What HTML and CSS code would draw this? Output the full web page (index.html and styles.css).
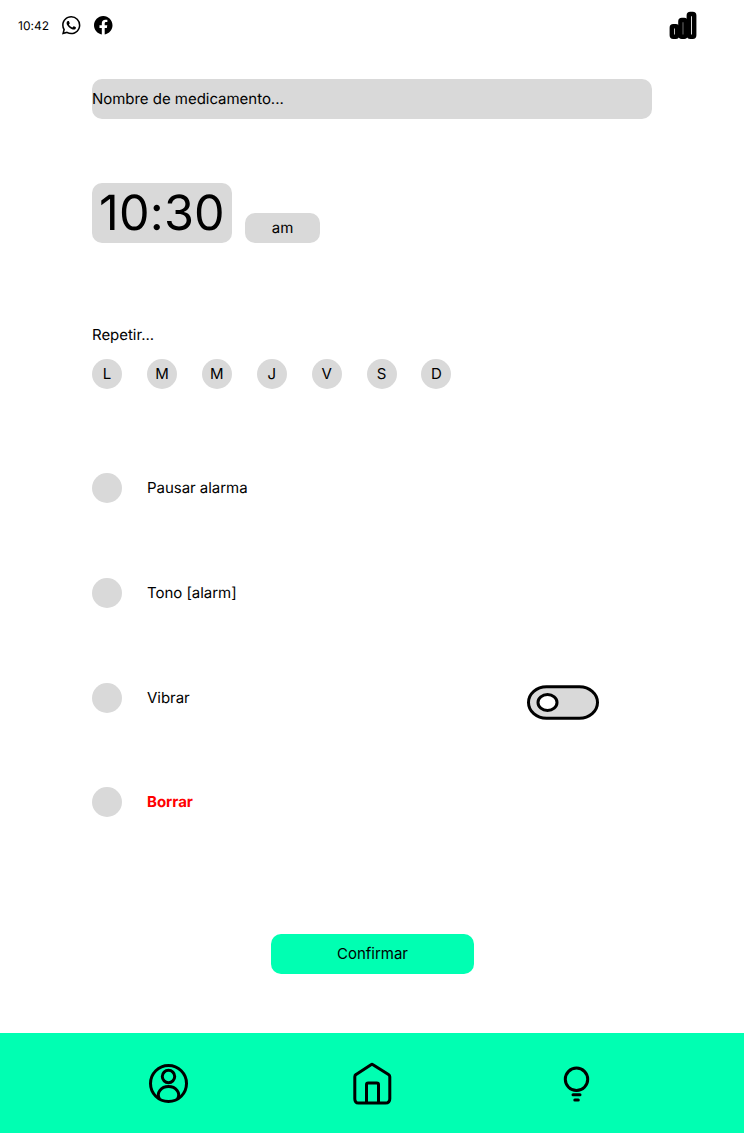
FILE: index.html
```html
<!DOCTYPE html>
<html lang="es">
<head>
<meta charset="utf-8">
<title>Alarma de medicamento</title>
<link rel="stylesheet" href="styles.css">
</head>
<body>
<header class="status">
  <span class="clock">10:42</span>
  <svg class="app-icon" viewBox="0 0 16 16"><path d="M13.601 2.326A7.85 7.85 0 0 0 7.994 0C3.627 0 .068 3.558.064 7.926c0 1.399.366 2.76 1.057 3.965L0 16l4.204-1.102a7.9 7.9 0 0 0 3.79.965h.004c4.368 0 7.926-3.558 7.93-7.93A7.9 7.9 0 0 0 13.6 2.326zM7.994 14.521a6.6 6.6 0 0 1-3.356-.92l-.24-.144-2.494.654.666-2.433-.156-.251a6.56 6.56 0 0 1-1.007-3.505c0-3.626 2.957-6.584 6.591-6.584a6.56 6.56 0 0 1 4.66 1.931 6.56 6.56 0 0 1 1.928 4.66c-.004 3.639-2.961 6.592-6.592 6.592m3.615-4.934c-.197-.099-1.17-.578-1.353-.646-.182-.065-.315-.099-.445.099-.133.197-.513.646-.627.775-.114.133-.232.148-.43.05-.197-.1-.836-.308-1.592-.985-.59-.525-.985-1.175-1.103-1.372-.114-.198-.011-.304.088-.403.087-.088.197-.232.296-.346.1-.114.133-.198.198-.33.065-.134.034-.248-.015-.347-.05-.099-.445-1.076-.612-1.47-.16-.389-.323-.335-.445-.34-.114-.007-.247-.007-.38-.007a.73.73 0 0 0-.529.247c-.182.198-.691.677-.691 1.654s.71 1.916.81 2.049c.098.133 1.394 2.132 3.383 2.992.47.205.84.326 1.129.418.475.152.904.129 1.246.08.38-.058 1.171-.48 1.338-.943.164-.464.164-.86.114-.943-.049-.084-.182-.133-.38-.232"/></svg>
  <svg class="app-icon" viewBox="0 0 16 16"><path d="M16 8.049c0-4.446-3.582-8.05-8-8.05C3.58 0 0 3.603 0 8.05c0 4.017 2.926 7.347 6.75 7.951v-5.625H4.72V8.05h2.03V6.275c0-2.017 1.195-3.131 3.022-3.131.876 0 1.791.157 1.791.157v1.98h-1.009c-.993 0-1.303.621-1.303 1.258v1.51h2.218l-.354 2.326H9.25V16c3.824-.604 6.75-3.934 6.75-7.951"/></svg>
  <svg class="signal" viewBox="0 0 28 28" stroke="#000" stroke-width="4.4">
    <rect x="2.800" y="14.200" width="5.400" height="10.500" rx="1.500" fill="#bbb"/>
    <rect x="11.400" y="8" width="5.200" height="16.700" rx="1.500" fill="#888"/>
    <rect x="19.800" y="2" width="5.400" height="22.700" rx="1.500" fill="#ddd"/>
  </svg>
</header>
<main class="content">
  <div class="name-field">Nombre de medicamento...</div>
  <div class="time-row">
    <div class="time">10:30</div>
    <div class="period">am</div>
  </div>
  <div class="repeat-label">Repetir...</div>
  <div class="days">
    <span class="dot">L</span><span class="dot">M</span><span class="dot">M</span><span class="dot">J</span><span class="dot">V</span><span class="dot">S</span><span class="dot">D</span>
  </div>
  <div class="options">
    <div class="option"><span class="dot"></span><span>Pausar alarma</span></div>
    <div class="option"><span class="dot"></span><span>Tono [alarm]</span></div>
    <div class="option"><span class="dot"></span><span>Vibrar</span>
      <svg class="toggle" viewBox="0 0 72 35" stroke="#000" stroke-width="3"><rect x="1.5" y="1.700" width="69" height="31.500" rx="18" ry="15.750" fill="#d9d9d9"/><ellipse cx="20.500" cy="17.500" rx="9.500" ry="7.900" fill="#fff"/></svg>
    </div>
    <div class="option"><span class="dot"></span><span class="delete">Borrar</span></div>
  </div>
  <button class="confirm">Confirmar</button>
</main>
<nav class="tabs">
  <svg class="tab-icon" viewBox="-0.500 -0.500 44 44"><circle cx="22" cy="22" r="18"/><circle cx="22" cy="15" r="6.200"/><path d="M12.800 37C11.400 34.500 11.800 31 13.500 28.800C15.500 26.200 18.500 24.900 22 24.900S28.500 26.200 30.500 28.800C32.200 31 32.600 34.500 31.200 37"/></svg>
  <svg class="tab-icon" viewBox="0 -0.800 44 44"><path d="M21 2.900Q22 2.200 23 2.900L38.500 12.600Q39.800 13.400 39.800 15V37Q39.800 41.300 35.500 41.300H8.500Q4.800 41.300 4.800 37V15Q4.800 13.400 6.100 12.600ZM16.500 41V23Q16.500 21.300 18.200 21.300H26.800Q28.500 21.300 28.500 23V41"/></svg>
  <svg class="tab-icon" viewBox="-0.500 -0.500 44 44"><circle cx="22" cy="17.800" r="11.200"/><path stroke-linecap="round" d="M18.500 33.300H25.500M20.300 38.500H23.800"/></svg>
</nav>
</body>
</html>
```
FILE: styles.css
```css
* { box-sizing: border-box; }

body {
  margin: 0;
  height: 1133px;
  display: flex;
  flex-direction: column;
  background: #fff;
  color: #000;
  font: 15px/18px Inter, sans-serif;
  letter-spacing: -0.03px;
  text-rendering: geometricPrecision;
}

.status {
  display: flex;
  align-items: center;
  height: 51px;
  padding: 0 47px 0 18px;
}

.clock {
  width: 44px;
  font-size: 12px;
  letter-spacing: 0.05px;
}

.app-icon {
  width: 18.5px;
  height: 18.5px;
  margin-right: 13.5px;
}

.signal {
  width: 28px;
  height: 28px;
  margin-left: auto;
  overflow: visible;
}

.content {
  flex: 1;
  display: flex;
  flex-direction: column;
  padding: 28px 92px 0;
}

.name-field {
  height: 40px;
  border-radius: 10px;
  background: #d9d9d9;
  line-height: 40px;
}

.time-row {
  display: flex;
  align-items: flex-end;
  gap: 13px;
  margin-top: 64px;
}

.time,
.period {
  border-radius: 10px;
  background: #d9d9d9;
  text-align: center;
}

.time {
  width: 140px;
  height: 60px;
  font-size: 48.5px;
  letter-spacing: 0.2px;
  line-height: 60px;
}

.period {
  width: 75px;
  height: 30px;
  line-height: 30px;
}

.repeat-label { margin-top: 83px; }

.days {
  display: flex;
  gap: 24.91px;
  margin-top: 15px;
}

.dot {
  flex: none;
  width: 30px;
  height: 30px;
  border-radius: 50%;
  background: #d9d9d9;
  line-height: 30px;
  text-align: center;
}

.options {
  display: grid;
  gap: 74.8px;
  margin-top: 84px;
}

.option {
  display: flex;
  align-items: center;
  gap: 25px;
  height: 30px;
}

.toggle {
  width: 72px;
  height: 35px;
  margin: 9px 53px 0 auto;
}

.delete {
  color: #f00;
  font-weight: 700;
}

.confirm {
  align-self: center;
  width: 203px;
  height: 40px;
  margin-top: 116.6px;
  margin-left: 1px;
  padding: 0;
  border: 0;
  border-radius: 10px;
  background: #00ffb2;
  color: #000;
  font: inherit;
  letter-spacing: inherit;
}

.tabs {
  display: flex;
  justify-content: center;
  gap: 160px;
  height: 100px;
  padding-top: 28px;
  background: #00ffb2;
}

.tab-icon {
  width: 44px;
  height: 44px;
  fill: none;
  stroke: #000;
  stroke-width: 3;
}
```
